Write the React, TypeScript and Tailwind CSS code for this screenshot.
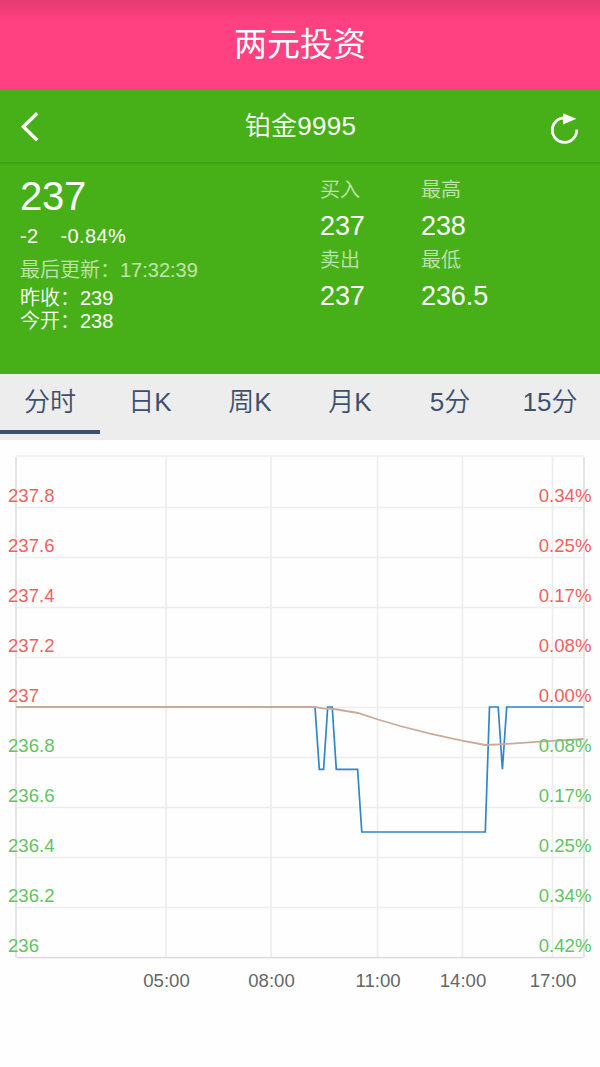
import React, { useState } from 'react';

const UP = '#f0625d';
const DOWN = '#62c462';

const tabs = ['分时', '日K', '周K', '月K', '5分', '15分'];

const quotes = [
  { label: '买入', value: '237' },
  { label: '最高', value: '238' },
  { label: '卖出', value: '237' },
  { label: '最低', value: '236.5' },
];

const rows = [
  { price: '237.8', pct: '0.34%', color: UP },
  { price: '237.6', pct: '0.25%', color: UP },
  { price: '237.4', pct: '0.17%', color: UP },
  { price: '237.2', pct: '0.08%', color: UP },
  { price: '237', pct: '0.00%', color: UP },
  { price: '236.8', pct: '0.08%', color: DOWN },
  { price: '236.6', pct: '0.17%', color: DOWN },
  { price: '236.4', pct: '0.25%', color: DOWN },
  { price: '236.2', pct: '0.34%', color: DOWN },
  { price: '236', pct: '0.42%', color: DOWN },
];

const times = [
  { x: 166, label: '05:00' },
  { x: 271, label: '08:00' },
  { x: 377.5, label: '11:00' },
  { x: 462.5, label: '14:00' },
  { x: 552.5, label: '17:00' },
];

function TimeChart() {
  return (
    <svg width="600" height="627" viewBox="0 0 600 627" className="block">
      <g stroke="#ededed" strokeWidth="1.6" fill="none">
        <path d="M16.5 16H583.5" />
        {rows.slice(0, 9).map((r, i) => (
          <path key={r.price} d={`M16.5 ${67.5 + i * 50}H583.5`} />
        ))}
        {times.map(t => (
          <path key={t.label} d={`M${t.x} 16.5V517`} />
        ))}
      </g>
      <path d="M16 17V517M584 17V517M16.5 517.6H583.5" stroke="#e1dddd" strokeWidth="1.6" fill="none" />

      <path
        d="M16.5 267H315L319.3 329.3H323.6L327.7 267H332.2L336.3 329.3H357.6L361.8 392H485.3L489.5 267H498.2L502.4 329.3L506.7 267H583.5"
        stroke="#3185c9"
        strokeWidth="1.7"
        fill="none"
      />
      <path
        d="M16.5 267H315L323 268.4L334 269L358 273L378 279.5L400 286L430 293.6L462 300.6L485.3 305L500 304.3L540 301.7L583.5 299"
        stroke="#cbaa9a"
        strokeWidth="1.8"
        fill="none"
      />

      <g fontSize="18.6">
        {rows.map((r, i) => (
          <g key={r.price} fill={r.color}>
            <text x="8" y={62 + i * 50}>{r.price}</text>
            <text x="591.5" y={62 + i * 50} textAnchor="end">{r.pct}</text>
          </g>
        ))}
        {times.map(t => (
          <text key={t.label} x={t.x + 0.5} y="547" textAnchor="middle" fill="#666">{t.label}</text>
        ))}
      </g>
    </svg>
  );
}

export default function App() {
  const [active, setActive] = useState(0);

  return (
    <div className="w-[600px] h-[1067px] overflow-hidden bg-[#fefefe] font-['Liberation_Sans','Noto_Sans_CJK_SC',sans-serif]">
      <header className="h-[90px] pb-[7px] flex items-center justify-center bg-[linear-gradient(#e43a72_0px,#ff4081_20px)] text-white">
        <h1 className="text-[33px] leading-[44px] font-['Noto_Sans_CJK_SC',sans-serif] font-normal">两元投资</h1>
      </header>

      <section className="h-[284px] bg-[#47b018] text-white">
        <div className="h-[74px] pl-5 pr-[21px] flex items-center justify-between border-b-2 border-[#40a016]">
          <button aria-label="返回" className="w-[26px]">
            <svg width="26" height="32" viewBox="0 0 26 32" fill="none">
              <path d="M17.2 3.2L3.4 16.8L17.2 30.3" stroke="white" strokeWidth="3.4" />
            </svg>
          </button>
          <h2 className="ml-[6px] text-[26px] leading-[36px] font-[350] tracking-[0.3px]">铂金9995</h2>
          <button aria-label="刷新" className="w-[30px]">
            <svg width="30" height="36" viewBox="0 0 30 36" fill="none">
              <path d="M15.5 9.9A12.2 12.2 0 1 0 27.7 21.6" stroke="white" strokeWidth="2.8" />
              <path d="M14 5.2L27.4 10.8L14 16.6Z" fill="white" />
            </svg>
          </button>
        </div>

        <div className="flex pl-5">
          <div className="w-[300px] pt-[9px] text-[20px]">
            <div className="text-[40px] leading-[46px] tracking-[-0.2px]">237</div>
            <div className="mt-[5px] flex gap-[22px] leading-[24px]">
              <span className="tracking-[0.3px]">-2</span>
              <span className="tracking-[0.4px]">-0.84%</span>
            </div>
            <div className="mt-[10px] leading-[24px] font-[350] text-white/65">最后更新：17:32:39</div>
            <div className="mt-[5px] leading-[23px] font-[350]">昨收：239</div>
            <div className="leading-[23px] font-[350]">今开：238</div>
          </div>
          <div className="grid grid-cols-[101px_120px] content-start pt-[11px]">
            {quotes.map(q => (
              <div key={q.label} className="h-[70px]">
                <div className="text-[20px] leading-[30px] font-[350] text-white/65">{q.label}</div>
                <div className="mt-px text-[27px] leading-[40px] tracking-[-0.1px]">{q.value}</div>
              </div>
            ))}
          </div>
        </div>
      </section>

      <nav className="h-[66px] grid grid-cols-6 bg-[#ededed] text-[#3c506e]">
        {tabs.map((t, i) => (
          <button
            key={t}
            onClick={() => setActive(i)}
            className={`h-[60px] text-[26px] leading-[56px] font-[350] border-b-4 ${
              active === i ? 'border-[#3c5070]' : 'border-transparent'
            }`}
          >
            {t}
          </button>
        ))}
      </nav>

      <TimeChart />
    </div>
  );
}
